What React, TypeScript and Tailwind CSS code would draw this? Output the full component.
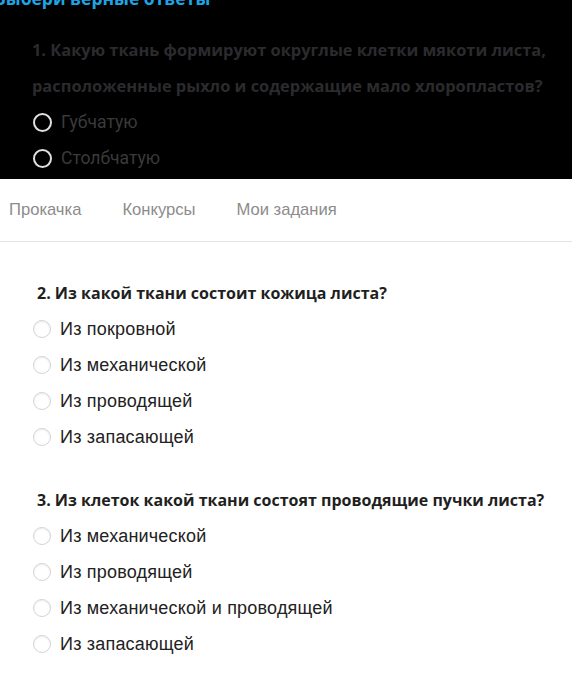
const q1Options = ["Губчатую", "Столбчатую"];

const questions = [
  {
    title: "2. Из какой ткани состоит кожица листа?",
    options: ["Из покровной", "Из механической", "Из проводящей", "Из запасающей"],
  },
  {
    title: "3. Из клеток какой ткани состоят проводящие пучки листа?",
    options: [
      "Из механической",
      "Из проводящей",
      "Из механической и проводящей",
      "Из запасающей",
    ],
  },
];

function Radio({ dark }: { dark?: boolean }) {
  return dark ? (
    <span className="block w-[19px] h-[19px] rounded-full border-2 border-[#e0e0e0] shrink-0" />
  ) : (
    <span className="block w-[18px] h-[18px] rounded-full border border-[#d4d4d4] bg-white shadow-[inset_0_1px_2px_rgba(0,0,0,0.08)] shrink-0" />
  );
}

export default function App() {
  return (
    <div className="w-[572px] h-[686px] bg-white overflow-hidden font-['Open_Sans',sans-serif]">
      {/* затемнённый блок сверху */}
      <div className="h-[179px] bg-black overflow-hidden">
        <div className="-mt-[12px] -ml-[6px] text-[17.5px] leading-[20px] font-bold text-[#1ea5e6]">
          Выбери верные ответы
        </div>
        <div className="pl-[32px] pt-[24px] w-[560px]">
          <p className="text-[16.4px] leading-[36px] font-bold text-[#2b2b2e]">
            1. Какую ткань формируют округлые клетки мякоти листа, расположенные рыхло и
            содержащие мало хлоропластов?
          </p>
          {q1Options.map((o) => (
            <label key={o} className="flex items-center gap-[9px] h-[36px] pl-[1px]">
              <Radio dark />
              <span className="font-['Roboto',sans-serif] text-[17.5px] text-[#3a3a3c]">{o}</span>
            </label>
          ))}
        </div>
      </div>

      {/* вкладки */}
      <nav className="flex items-center gap-[41px] h-[63px] pl-[9px] border-b border-[#e2e2e2] font-['Liberation_Sans',sans-serif] text-[16.6px] text-[#8c8c8c]">
        <span>Прокачка</span>
        <span>Конкурсы</span>
        <span>Мои задания</span>
      </nav>

      {/* вопросы */}
      <div className="pt-[33px] pl-[33px]">
        {questions.map((q) => (
          <div key={q.title} className="mb-[27px]">
            <h3 className="pl-[4px] h-[36px] flex items-center text-[16px] font-bold text-[#1f1f22]">
              {q.title}
            </h3>
            {q.options.map((o) => (
              <label key={o} className="flex items-center gap-[9px] h-[36px]">
                <Radio />
                <span className="font-['Liberation_Sans',sans-serif] text-[18px] tracking-[0.2px] text-[#222]">
                  {o}
                </span>
              </label>
            ))}
          </div>
        ))}
      </div>
    </div>
  );
}
